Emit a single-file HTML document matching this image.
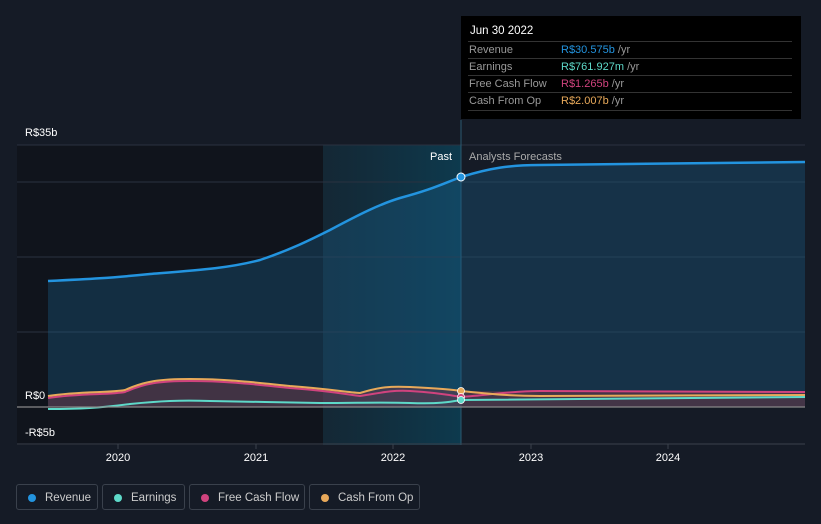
<!DOCTYPE html>
<html><head><style>
body{margin:0;width:821px;height:524px;background:#151b26;font-family:"Liberation Sans",sans-serif;overflow:hidden;position:relative}
.tt{position:absolute;left:461px;top:16px;width:340px;height:103px;background:#000;color:#fff;font-size:11px}
.tt .h{position:absolute;left:9px;top:9px;font-size:11.5px}
.tt .r{position:absolute;left:7px;width:324px;border-top:1px solid #333;height:17px;line-height:17px}
.tt .r span.l{color:#999;padding-left:1px;display:inline-block;width:92px}
.tt .r span.u{color:#999}
.leg{position:absolute;top:484px;height:26px;border:1px solid #3a414c;border-radius:3px;color:#ccc;font-size:11.5px;line-height:26px;box-sizing:border-box}
.leg i{position:absolute;left:11px;top:9px;width:8px;height:8px;border-radius:50%}
.leg span{position:absolute;left:28px}
</style></head><body>
<svg width="821" height="524" style="position:absolute;left:0;top:0">
<defs>
<linearGradient id="hl" x1="0" x2="1"><stop offset="0" stop-color="#13303f" stop-opacity=".6"/><stop offset="1" stop-color="#0d3a4e"/></linearGradient>
</defs>
<rect x="17" y="145" width="306" height="300" fill="#10141c"/>
<rect x="323" y="145" width="138" height="300" fill="url(#hl)"/>
<g stroke="#2a3240" stroke-width="1">
<line x1="17" y1="145" x2="805" y2="145"/><line x1="17" y1="182" x2="805" y2="182"/><line x1="17" y1="257" x2="805" y2="257"/><line x1="17" y1="332" x2="805" y2="332"/>
</g>
<line x1="461" y1="120" x2="461" y2="445" stroke="#2a5a70" stroke-width="1"/>
<path d="M48,281 C90,279 110,278 150,274 C200,270 230,268 260,260 C290,250 310,240 330,230 C360,214 380,204 400,198 C430,190 440,185 461,177 C490,168 510,165 540,165 L805,162 L805,407 L48,407Z" fill="#1b5f8a" fill-opacity=".35"/>
<path d="M48,281 C90,279 110,278 150,274 C200,270 230,268 260,260 C290,250 310,240 330,230 C360,214 380,204 400,198 C430,190 440,185 461,177 C490,168 510,165 540,165 L805,162" fill="none" stroke="#2394df" stroke-width="2.5"/>
<path d="M48,396 C80,391 110,393 125,390 C145,381 160,379 190,379 C230,379 260,383 290,386 C330,389 345,392 360,393 C380,390 390,386 410,387 C430,388 450,390 461,391 L805,392 L805,407 L48,407Z" fill="#7a3a48" fill-opacity=".45"/>
<path d="M48,398 C80,393 110,395 125,392 C145,383 160,381 190,381 C230,381 260,385 290,388 C330,391 345,394 360,396 C380,393 390,390 410,391 C430,392 450,395 461,397 C490,395 510,391 540,391 L805,392" fill="none" stroke="#d0437e" stroke-width="2"/>
<path d="M48,396 C80,391 110,393 125,390 C145,381 160,379 190,379 C230,379 260,383 290,386 C330,389 345,392 360,393 C380,387 390,386 410,387 C430,388 450,389 461,391 C490,394 510,396 540,396 L805,395" fill="none" stroke="#e8a95a" stroke-width="2"/>
<path d="M48,409 C80,409 100,408 130,404 C160,401 180,400 210,401 C250,402 280,402 320,403 C360,403 380,402 410,403 C440,404 450,402 461,400 L805,397" fill="none" stroke="#5ed9c9" stroke-width="2"/>
<line x1="17" y1="407" x2="805" y2="407" stroke="#888" stroke-width="1.2"/>
<line x1="17" y1="444" x2="805" y2="444" stroke="#3a414c" stroke-width="1"/>
<g stroke="#3a414c"><line x1="118" y1="444" x2="118" y2="449"/><line x1="256" y1="444" x2="256" y2="449"/><line x1="393" y1="444" x2="393" y2="449"/><line x1="531" y1="444" x2="531" y2="449"/><line x1="668" y1="444" x2="668" y2="449"/></g>
<circle cx="461" cy="177" r="4" fill="#2394df" stroke="#fff" stroke-width="1"/>
<circle cx="461" cy="391" r="3.5" fill="#e8a95a" stroke="#fff" stroke-width=".8"/>
<circle cx="461" cy="397" r="3.5" fill="#d0437e" stroke="#fff" stroke-width=".8"/>
<circle cx="461" cy="400" r="3.5" fill="#5ed9c9" stroke="#fff" stroke-width=".8"/>
<g font-family="Liberation Sans" font-size="11" fill="#fff">
<text x="25" y="136">R$35b</text><text x="25" y="399">R$0</text><text x="25" y="436">-R$5b</text>
<text x="430" y="160">Past</text><text x="469" y="160" fill="#aaa">Analysts Forecasts</text>
<g text-anchor="middle"><text x="118" y="461">2020</text><text x="256" y="461">2021</text><text x="393" y="461">2022</text><text x="531" y="461">2023</text><text x="668" y="461">2024</text></g>
</g>
</svg>
<div class="tt"><div class="h">Jun 30 2022</div>
<div class="r" style="top:25px"><span class="l">Revenue</span><span style="color:#2394df">R$30.575b</span> <span class="u">/yr</span></div>
<div class="r" style="top:42px"><span class="l">Earnings</span><span style="color:#5ed9c9">R$761.927m</span> <span class="u">/yr</span></div>
<div class="r" style="top:59px"><span class="l">Free Cash Flow</span><span style="color:#d0437e">R$1.265b</span> <span class="u">/yr</span></div>
<div class="r" style="top:76px;border-bottom:1px solid #333"><span class="l">Cash From Op</span><span style="color:#e8a95a">R$2.007b</span> <span class="u">/yr</span></div>
</div>
<div class="leg" style="left:16px;width:82px"><i style="background:#2394df"></i><span>Revenue</span></div>
<div class="leg" style="left:102px;width:83px"><i style="background:#5ed9c9"></i><span>Earnings</span></div>
<div class="leg" style="left:189px;width:116px"><i style="background:#d0437e"></i><span>Free Cash Flow</span></div>
<div class="leg" style="left:309px;width:111px"><i style="background:#e8a95a"></i><span>Cash From Op</span></div>
</body></html>
